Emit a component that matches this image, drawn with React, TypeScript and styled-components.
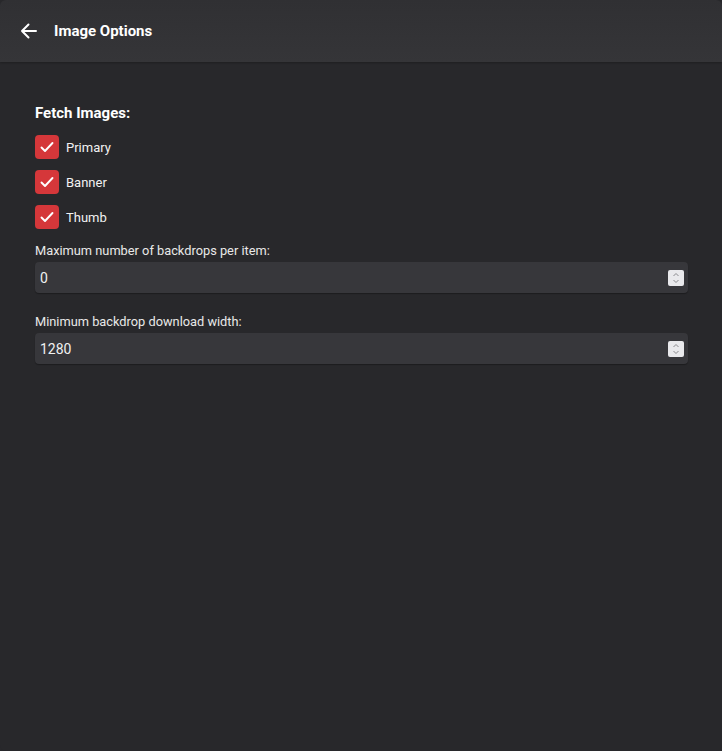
import React from "react";
import styled, { createGlobalStyle } from "styled-components";

const GlobalStyle = createGlobalStyle`
  html, body {
    margin: 0;
    padding: 0;
    background: #28282b;
  }
  body {
    font-family: Roboto, "Noto Sans", sans-serif;
    color: #fff;
  }
`;

const Dialog = styled.div`
  width: 722px;
  height: 751px;
  background: #28282b;
  border-radius: 6px;
  overflow: hidden;
  display: flex;
  flex-direction: column;
`;

const Header = styled.header`
  height: 62px;
  flex-shrink: 0;
  display: flex;
  align-items: center;
  gap: 17px;
  padding: 0 0 0 19px;
  background: linear-gradient(180deg, #303033 0%, #353538 100%);
  box-shadow: 0 1px 2px rgba(0, 0, 0, 0.25);
`;

const BackButton = styled.button`
  width: 18px;
  height: 18px;
  padding: 0;
  border: 0;
  background: none;
  color: #fff;
  display: flex;
  align-items: center;
  justify-content: center;
  cursor: pointer;
`;

const Title = styled.h1`
  margin: 0;
  font-size: 15px;
  font-weight: 700;
  color: #fff;
`;

const Content = styled.main`
  padding: 42px 35px 0 35px;
  display: flex;
  flex-direction: column;
`;

const SectionTitle = styled.h2`
  margin: 0 0 13px 0;
  font-size: 15px;
  font-weight: 700;
  color: #fff;
`;

const CheckList = styled.div`
  display: flex;
  flex-direction: column;
  gap: 11px;
  margin-bottom: 14px;
`;

const CheckRow = styled.label`
  display: flex;
  align-items: center;
  gap: 7px;
  font-size: 13px;
  color: #f2f2f2;
  height: 24px;
`;

const Box = styled.span<{ $checked: boolean }>`
  width: 24px;
  height: 24px;
  border-radius: 4px;
  background: ${(p) => (p.$checked ? "#d5373a" : "transparent")};
  border: ${(p) => (p.$checked ? "0" : "2px solid #aaa")};
  display: flex;
  align-items: center;
  justify-content: center;
  box-sizing: border-box;
`;

const Field = styled.div`
  display: flex;
  flex-direction: column;
  gap: 4px;
  margin-bottom: 21px;
`;

const FieldLabel = styled.label`
  font-size: 12.8px;
  color: #e8e8e8;
`;

const InputWrap = styled.div`
  height: 31px;
  width: 653px;
  background: #37373b;
  border-radius: 4px;
  display: flex;
  align-items: center;
  padding: 0 4px 0 5px;
  box-sizing: border-box;
  box-shadow: 0 1px 1px rgba(0, 0, 0, 0.3);
`;

const NumberText = styled.span`
  flex: 1;
  font-size: 14px;
  color: #f0f0f0;
`;

const Spinner = styled.span`
  width: 16px;
  height: 16px;
  background: #e9e9ec;
  border-radius: 2px;
  display: flex;
  align-items: center;
  justify-content: center;
`;

const Check = () => (
  <svg width="16" height="16" viewBox="0 0 16 16" fill="none">
    <path d="M2.5 8.5 L6 12 L13.5 4" stroke="#fff" strokeWidth="1.9" strokeLinecap="round" strokeLinejoin="round" />
  </svg>
);

const SpinIcon = () => (
  <svg width="10" height="14" viewBox="0 0 10 14" fill="none">
    <path d="M2.5 5 L5 2.5 L7.5 5" stroke="#8a8a8e" strokeWidth="1" />
    <path d="M2.5 9 L5 11.5 L7.5 9" stroke="#8a8a8e" strokeWidth="1" />
  </svg>
);

const images = ["Primary", "Banner", "Thumb"];

export default function App() {
  return (
    <>
      <GlobalStyle />
      <Dialog>
        <Header>
          <BackButton aria-label="Back">
            <svg width="17" height="16" viewBox="0 0 17 16" fill="none">
              <path d="M16 8 H2 M8.5 1.5 L2 8 L8.5 14.5" stroke="#fff" strokeWidth="2" strokeLinecap="round" strokeLinejoin="round" />
            </svg>
          </BackButton>
          <Title>Image Options</Title>
        </Header>
        <Content>
          <SectionTitle>Fetch Images:</SectionTitle>
          <CheckList>
            {images.map((name) => (
              <CheckRow key={name}>
                <Box $checked>
                  <Check />
                </Box>
                {name}
              </CheckRow>
            ))}
          </CheckList>
          <Field>
            <FieldLabel>Maximum number of backdrops per item:</FieldLabel>
            <InputWrap>
              <NumberText>0</NumberText>
              <Spinner>
                <SpinIcon />
              </Spinner>
            </InputWrap>
          </Field>
          <Field>
            <FieldLabel>Minimum backdrop download width:</FieldLabel>
            <InputWrap>
              <NumberText>1280</NumberText>
              <Spinner>
                <SpinIcon />
              </Spinner>
            </InputWrap>
          </Field>
        </Content>
      </Dialog>
    </>
  );
}
